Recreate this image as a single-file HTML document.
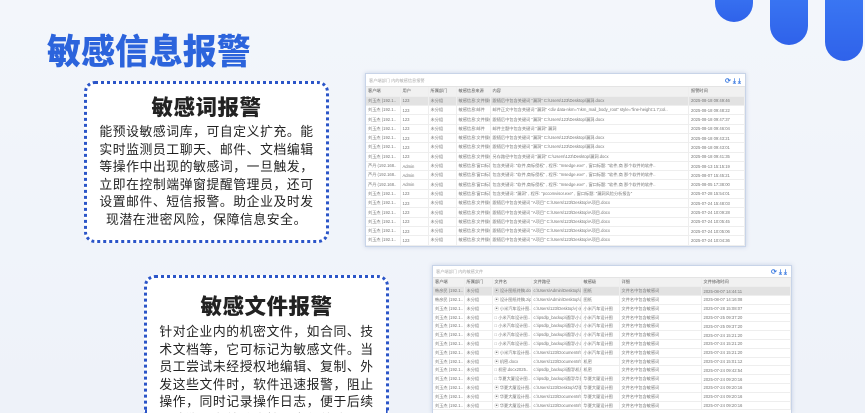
<!DOCTYPE html>
<html><head><meta charset="utf-8"><style>
*{margin:0;padding:0;box-sizing:border-box}
html,body{width:865px;height:413px;overflow:hidden}
body{background:linear-gradient(180deg,#f3f6fb 0%,#eef2f9 100%);font-family:"Liberation Sans","Noto Sans CJK SC",sans-serif;position:relative}
.bar{position:absolute;width:38px;border-radius:0 0 19px 19px;background:linear-gradient(180deg,#3d7cf5,#2f62ea)}
h1{position:absolute;left:47px;top:24px;font-size:35px;font-weight:900;color:#2c64dc;transform:scaleX(0.97);transform-origin:left;white-space:nowrap}
.box{position:absolute;background:#fff;border:3px dotted #2b55c8;border-radius:11px;text-align:center;overflow:hidden}
.box h2{font-size:21.5px;font-weight:900;color:#222;letter-spacing:0.5px;line-height:26px}
.box p{font-size:12.8px;line-height:17.6px;color:#222;letter-spacing:0.6px;white-space:nowrap}
.shot{position:absolute;background:#fff;border:1px solid #c8d4e8;box-shadow:0 0 4px rgba(80,110,170,.25);overflow:hidden;font-size:4.2px;color:#777;white-space:nowrap}
.tb{height:13px;border-bottom:1px solid #e4e4e4;padding:4px 3px;color:#aaa;position:relative}
.ic{position:absolute;top:3px;color:#3a7ae0;font-size:7px;font-weight:bold}
table{border-collapse:collapse;width:100%;table-layout:fixed}
td{border-right:1px solid #eee;border-bottom:1px solid #eee;padding:0 2px;overflow:hidden}
tr.h td{background:#f1f1f1;color:#555}
tr.s td{background:#e2e2e2}
.t1 td{height:9.3px}
.t2 td{height:8.8px}
.x{color:#e0562a;font-weight:bold}
</style></head><body>
<div class="bar" style="left:715px;top:-20px;height:42px"></div>
<div class="bar" style="left:770px;top:-20px;height:65px"></div>
<div class="bar" style="left:825px;top:-20px;height:81px"></div>
<h1>敏感信息报警</h1>

<div class="box" style="left:84px;top:81px;width:245px;height:162px;padding:11px 0 0 0">
<h2>敏感词报警</h2>
<p style="margin-top:2px">能预设敏感词库，可自定义扩充。能<br>实时监测员工聊天、邮件、文档编辑<br>等操作中出现的敏感词，一旦触发，<br>立即在控制端弹窗提醒管理员，还可<br>设置邮件、短信报警。助企业及时发<br>现潜在泄密风险，保障信息安全。</p>
</div>

<div class="box" style="left:144px;top:275px;width:245px;height:138px;padding:16px 0 0 0;border-bottom:none;border-radius:11px 11px 0 0">
<h2>敏感文件报警</h2>
<p style="margin-top:3px">针对企业内的机密文件，如合同、技<br>术文档等，它可标记为敏感文件。当<br>员工尝试未经授权地编辑、复制、外<br>发这些文件时，软件迅速报警，阻止<br>操作，同时记录操作日志，便于后续<br>追溯，有效防止核心文件外泄。</p>
</div>

<div class="shot" style="left:365px;top:73px;width:381px;height:174px">
<div class="tb">客户端部门 内的敏感信息报警<span class="ic" style="right:4px">⟳ ⤓ ⤓</span></div>
<table class="t1"><colgroup><col style="width:34px"><col style="width:28px"><col style="width:28px"><col style="width:34px"><col><col style="width:56px"></colgroup>
<tr class="h"><td>客户端</td><td>用户</td><td>所属部门</td><td>敏感信息来源</td><td>内容</td><td>报警时间</td></tr>
<tr class="s"><td>刘玉杰 (192.1..</td><td>123</td><td>未分组</td><td>敏感信息:文件操作</td><td>跟随后中包含关键词 "漏洞" C:\Users\123\Desktop\漏洞.docx</td><td>2025-08-18 09:49:46</td></tr>
<tr><td>刘玉杰 (192.1..</td><td>123</td><td>未分组</td><td>敏感信息:邮件</td><td>邮件正文中包含关键词 "漏洞" &lt;div data-nkm="nkm_mail_body_root" style="line-height:1.7;col..</td><td>2025-08-18 09:48:22</td></tr>
<tr><td>刘玉杰 (192.1..</td><td>123</td><td>未分组</td><td>敏感信息:文件操作</td><td>跟随后中包含关键词 "漏洞" C:\Users\123\Desktop\漏洞.docx</td><td>2025-08-18 09:47:37</td></tr>
<tr><td>刘玉杰 (192.1..</td><td>123</td><td>未分组</td><td>敏感信息:邮件</td><td>邮件主题中包含关键词 "漏洞" 漏洞</td><td>2025-08-18 09:46:04</td></tr>
<tr><td>刘玉杰 (192.1..</td><td>123</td><td>未分组</td><td>敏感信息:文件操作</td><td>跟随后中包含关键词 "漏洞" C:\Users\123\Desktop\漏洞.docx</td><td>2025-08-18 09:43:21</td></tr>
<tr><td>刘玉杰 (192.1..</td><td>123</td><td>未分组</td><td>敏感信息:文件操作</td><td>跟随后中包含关键词 "漏洞" C:\Users\123\Desktop\漏洞.docx</td><td>2025-08-18 09:43:01</td></tr>
<tr><td>刘玉杰 (192.1..</td><td>123</td><td>未分组</td><td>敏感信息:文件操作</td><td>另存路径中包含关键词 "漏洞" C:\Users\123\Desktop\漏洞.docx</td><td>2025-08-18 09:41:35</td></tr>
<tr><td>芦丹 (192.168..</td><td>Admin</td><td>未分组</td><td>敏感信息:窗口标题</td><td>包含关键词: "软件,商标侵权" , 程序: "msedge.exe" , 窗口标题: "软件,商 那个软件的软件..</td><td>2025-08-13 15:15:19</td></tr>
<tr><td>芦丹 (192.168..</td><td>Admin</td><td>未分组</td><td>敏感信息:窗口标题</td><td>包含关键词: "软件,商标侵权" , 程序: "msedge.exe" , 窗口标题: "软件,商 那个软件的软件..</td><td>2025-08-07 15:45:21</td></tr>
<tr><td>芦丹 (192.168..</td><td>Admin</td><td>未分组</td><td>敏感信息:窗口标题</td><td>包含关键词: "软件,商标侵权" , 程序: "msedge.exe" , 窗口标题: "软件,商 那个软件的软件..</td><td>2025-08-05 17:38:00</td></tr>
<tr><td>刘玉杰 (192.1..</td><td>123</td><td>未分组</td><td>敏感信息:窗口标题</td><td>包含关键词: "漏洞" , 程序: "pccomvisor.exe" , 窗口标题: "漏洞风险分析报告"</td><td>2025-07-28 15:54:01</td></tr>
<tr><td>刘玉杰 (192.1..</td><td>123</td><td>未分组</td><td>敏感信息:文件操作</td><td>跟随后中包含关键词 "A项目" C:\Users\123\Desktop\A项目.docx</td><td>2025-07-24 15:48:03</td></tr>
<tr><td>刘玉杰 (192.1..</td><td>123</td><td>未分组</td><td>敏感信息:文件操作</td><td>跟随后中包含关键词 "A项目" C:\Users\123\Desktop\A项目.docx</td><td>2025-07-24 10:09:28</td></tr>
<tr><td>刘玉杰 (192.1..</td><td>123</td><td>未分组</td><td>敏感信息:文件操作</td><td>跟随后中包含关键词 "A项目" C:\Users\123\Desktop\A项目.docx</td><td>2025-07-24 10:05:45</td></tr>
<tr><td>刘玉杰 (192.1..</td><td>123</td><td>未分组</td><td>敏感信息:文件操作</td><td>跟随后中包含关键词 "A项目" C:\Users\123\Desktop\A项目.docx</td><td>2025-07-24 10:05:06</td></tr>
<tr><td>刘玉杰 (192.1..</td><td>123</td><td>未分组</td><td>敏感信息:文件操作</td><td>跟随后中包含关键词 "A项目" C:\Users\123\Desktop\A项目.docx</td><td>2025-07-24 10:04:36</td></tr>
</table></div>

<div class="shot" style="left:432px;top:265px;width:360px;height:148px;border-bottom:none">
<div class="tb" style="height:12px;padding-top:3px">客户端部门 内的敏感文件<span class="ic" style="right:4px;top:2px">⟳ ⤓ ⤓</span></div>
<table class="t2"><colgroup><col style="width:31px"><col style="width:28px"><col style="width:39px"><col style="width:50px"><col style="width:38px"><col style="width:82px"><col></colgroup>
<tr class="h"><td>客户端</td><td>所属部门</td><td>文件名</td><td>文件路径</td><td>敏感级</td><td>详细</td><td>文件修改时间</td></tr>
<tr class="s"><td>韩彦民 (192.1..</td><td>未分组</td><td>▣ 设计图纸终稿.do..</td><td>c:\Users\Admin\Desktop\设计图纸.. <span class="x">✖ ⚠</span></td><td>图纸</td><td>文件名中包含敏感词</td><td>2025-08-07 14:44:11</td></tr>
<tr><td>韩彦民 (192.1..</td><td>未分组</td><td>▣ 设计图纸终稿.zip</td><td>c:\Users\Admin\Desktop\设计图纸.. <span class="x">✖ ⚠</span></td><td>图纸</td><td>文件名中包含敏感词</td><td>2025-08-07 14:16:08</td></tr>
<tr><td>刘玉杰 (192.1..</td><td>未分组</td><td>▣ 小米汽车设计图..</td><td>c:\Users\123\Desktop\小米汽车.. <span class="x">✖ ⚠</span></td><td>小米汽车设计图</td><td>文件名中包含敏感词</td><td>2025-07-28 15:08:07</td></tr>
<tr><td>刘玉杰 (192.1..</td><td>未分组</td><td>□ 小米汽车设计图..</td><td>c:\ipsdlp_backup\通用\小米汽车.. <span class="x">✖ ⚠</span></td><td>小米汽车设计图</td><td>文件名中包含敏感词</td><td>2025-07-25 09:37:20</td></tr>
<tr><td>刘玉杰 (192.1..</td><td>未分组</td><td>□ 小米汽车设计图..</td><td>c:\ipsdlp_backup\通用\小米汽车.. <span class="x">✖ ⚠</span></td><td>小米汽车设计图</td><td>文件名中包含敏感词</td><td>2025-07-25 09:37:20</td></tr>
<tr><td>刘玉杰 (192.1..</td><td>未分组</td><td>□ 小米汽车设计图..</td><td>c:\ipsdlp_backup\通用\小米汽车.. <span class="x">✖ ⚠</span></td><td>小米汽车设计图</td><td>文件名中包含敏感词</td><td>2025-07-24 15:21:20</td></tr>
<tr><td>刘玉杰 (192.1..</td><td>未分组</td><td>□ 小米汽车设计图..</td><td>c:\ipsdlp_backup\通用\小米汽车.. <span class="x">✖ ⚠</span></td><td>小米汽车设计图</td><td>文件名中包含敏感词</td><td>2025-07-24 15:21:20</td></tr>
<tr><td>刘玉杰 (192.1..</td><td>未分组</td><td>▣ 小米汽车设计图..</td><td>c:\Users\123\Documents\WeChat F.. <span class="x">✖ ⚠</span></td><td>小米汽车设计图</td><td>文件名中包含敏感词</td><td>2025-07-24 15:21:20</td></tr>
<tr><td>刘玉杰 (192.1..</td><td>未分组</td><td>▣ 机密.docx</td><td>c:\Users\123\Documents\WeChat F.. <span class="x">✖ ⚠</span></td><td>机密</td><td>文件名中包含敏感词</td><td>2025-07-24 15:01:12</td></tr>
<tr><td>刘玉杰 (192.1..</td><td>未分组</td><td>□ 机密.docx2025..</td><td>c:\ipsdlp_backup\通用\机密.docx.20.. <span class="x">✖ ⚠</span></td><td>机密</td><td>文件名中包含敏感词</td><td>2025-07-24 09:42:54</td></tr>
<tr><td>刘玉杰 (192.1..</td><td>未分组</td><td>□ 华夏大厦设计图..</td><td>c:\ipsdlp_backup\通用\华夏大厦设.. <span class="x">✖ ⚠</span></td><td>华夏大厦设计图</td><td>文件名中包含敏感词</td><td>2025-07-24 09:20:16</td></tr>
<tr><td>刘玉杰 (192.1..</td><td>未分组</td><td>▣ 华夏大厦设计图..</td><td>c:\Users\123\Desktop\华夏大厦设.. <span class="x">✖ ⚠</span></td><td>华夏大厦设计图</td><td>文件名中包含敏感词</td><td>2025-07-24 09:20:16</td></tr>
<tr><td>刘玉杰 (192.1..</td><td>未分组</td><td>▣ 华夏大厦设计图..</td><td>c:\Users\123\Documents\WeChat F.. <span class="x">✖ ⚠</span></td><td>华夏大厦设计图</td><td>文件名中包含敏感词</td><td>2025-07-24 09:20:16</td></tr>
<tr><td>刘玉杰 (192.1..</td><td>未分组</td><td>▣ 华夏大厦设计图..</td><td>c:\Users\123\Documents\WeChat F.. <span class="x">✖ ⚠</span></td><td>华夏大厦设计图</td><td>文件名中包含敏感词</td><td>2025-07-24 09:20:16</td></tr>
</table></div>
</body></html>
